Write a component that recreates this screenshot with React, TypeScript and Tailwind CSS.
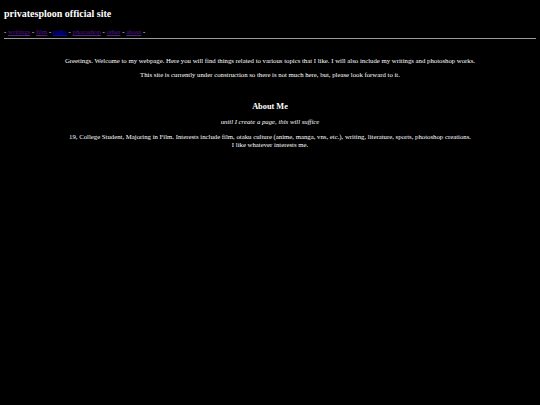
export default function App() {
  return (
    <div
      className="min-h-[405px] bg-black px-[4px] pt-[8px] text-white"
      style={{ fontFamily: '"Liberation Serif", "Times New Roman", serif' }}
    >
      <h1 className="text-[10px] font-bold leading-[12px]">privatesploon official site</h1>
      <nav className="mt-[8px] text-[6.8px] leading-[8px]">
        -{" "}
        <a href="#" className="text-[#551a8b] underline">writings</a> -{" "}
        <a href="#" className="text-[#551a8b] underline">film</a> -{" "}
        <a href="#" className="text-[#0000ee] underline">radio</a> -{" "}
        <a href="#" className="text-[#551a8b] underline">photoshop</a> -{" "}
        <a href="#" className="text-[#551a8b] underline">other</a> -{" "}
        <a href="#" className="text-[#551a8b] underline">about</a> -
      </nav>
      <hr className="mt-[2px] border-t border-[#9a9a9a]" />
      <div className="text-center text-[6.75px] leading-[8px]">
        <p className="mt-[18px]">
          Greetings. Welcome to my webpage. Here you will find things related to various topics that I like. I will also include my writings and photoshop works.
        </p>
        <p className="mt-[6px]">
          This site is currently under construction so there is not much here, but, please look forward to it.
        </p>
        <h2 className="mt-[23px] text-[8.3px] font-bold leading-[10px]">About Me</h2>
        <p className="mt-[6px] italic">until I create a page, this will suffice</p>
        <p className="mt-[7px]">
          19, College Student, Majoring in Film. Interests include film, otaku culture (anime, manga, vns, etc.), writing, literature, sports, photoshop creations.
          <br />
          I like whatever interests me.
        </p>
      </div>
    </div>
  );
}
